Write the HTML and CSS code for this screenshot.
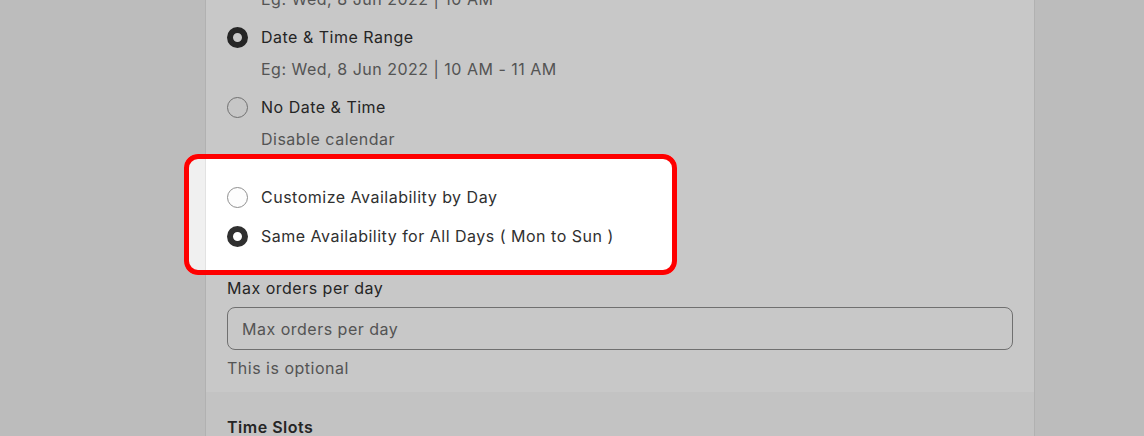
FILE: index.html
```html
<!DOCTYPE html>
<html lang="en">
<head>
<meta charset="utf-8">
<title>Availability settings</title>
<link rel="stylesheet" href="styles.css">
</head>
<body>
<div class="page">
  <div class="card">
    <div class="section">
      <div class="group group-type">
        <p class="help">Eg: Wed, 8 Jun 2022 | 10 AM</p>
        <div class="choice">
          <div class="row"><span class="radio checked"></span><span class="label">Date &amp; Time Range</span></div>
          <p class="help">Eg: Wed, 8 Jun 2022 | 10 AM - 11 AM</p>
        </div>
        <div class="choice">
          <div class="row"><span class="radio"></span><span class="label">No Date &amp; Time</span></div>
          <p class="help">Disable calendar</p>
        </div>
      </div>
      <div class="group group-days">
        <div class="row"><span class="radio"></span><span class="label">Customize Availability by Day</span></div>
        <div class="row"><span class="radio checked"></span><span class="label">Same Availability for All Days ( Mon to Sun )</span></div>
      </div>
      <div class="field">
        <div class="field-label">Max orders per day</div>
        <div class="input"><span class="placeholder">Max orders per day</span></div>
        <p class="help">This is optional</p>
      </div>
    </div>
    <div class="section section-secondary">
      <h2 class="heading">Time Slots</h2>
    </div>
  </div>
  <div class="highlight"></div>
</div>
</body>
</html>
```
FILE: styles.css
```css
html, body {
  margin: 0;
  padding: 0;
}
body {
  background: #f0f0f0;
  font-family: Inter, "Noto Sans", "Liberation Sans", sans-serif;
  font-size: 16px;
  line-height: 24px;
  letter-spacing: 0.5px;
  color: #303030;
  width: 1144px;
  height: 436px;
  overflow: hidden;
}
.page {
  position: relative;
  display: flow-root;
  height: 436px;
  padding-left: 205px;
}
.card {
  width: 828px;
  margin-top: -13px;
  background: #ffffff;
  border-left: 1px solid #e2e2e2;
  border-right: 1px solid #e2e2e2;
}
.section {
  padding: 0 21px 12px;
}
.section-secondary {
  background: #f9f9f9;
  padding-top: 23px;
  padding-bottom: 40px;
}
.group {
  display: flex;
  flex-direction: column;
}
.group-type {
  gap: 14px;
}
.group-days {
  gap: 15px;
  margin-top: 34px;
}
.row {
  display: flex;
  align-items: center;
  gap: 13px;
  height: 24px;
}
.radio {
  box-sizing: border-box;
  width: 21px;
  height: 21px;
  flex: none;
  border-radius: 50%;
  border: 1px solid #8f8f8f;
  background: #fdfdfd;
}
.radio.checked {
  border: 6.5px solid #303030;
  background: #ffffff;
}
.label {
  color: #303030;
}
.help {
  margin: 0;
  color: #6b6b6b;
  padding-left: 34px;
}
.choice .help {
  margin-top: 8px;
}
.field {
  margin-top: 28px;
}
.field .help {
  padding-left: 0;
  margin-top: 6px;
}
.field-label {
  color: #303030;
}
.input {
  box-sizing: border-box;
  margin-top: 7px;
  height: 43px;
  border: 1px solid #8f8f8f;
  border-radius: 8px;
  padding: 0 14px;
  display: flex;
  align-items: center;
}
.placeholder {
  color: #6b6b6b;
}
.heading {
  margin: 0;
  font-size: 16px;
  line-height: 24px;
  font-weight: 600;
  color: #303030;
}
.highlight {
  position: absolute;
  left: 184px;
  top: 154px;
  width: 493px;
  height: 121px;
  box-sizing: border-box;
  border: 5px solid #fe0000;
  border-radius: 14px;
  box-shadow: 0 0 0 3000px rgba(0, 0, 0, 0.216);
  pointer-events: none;
}
```
